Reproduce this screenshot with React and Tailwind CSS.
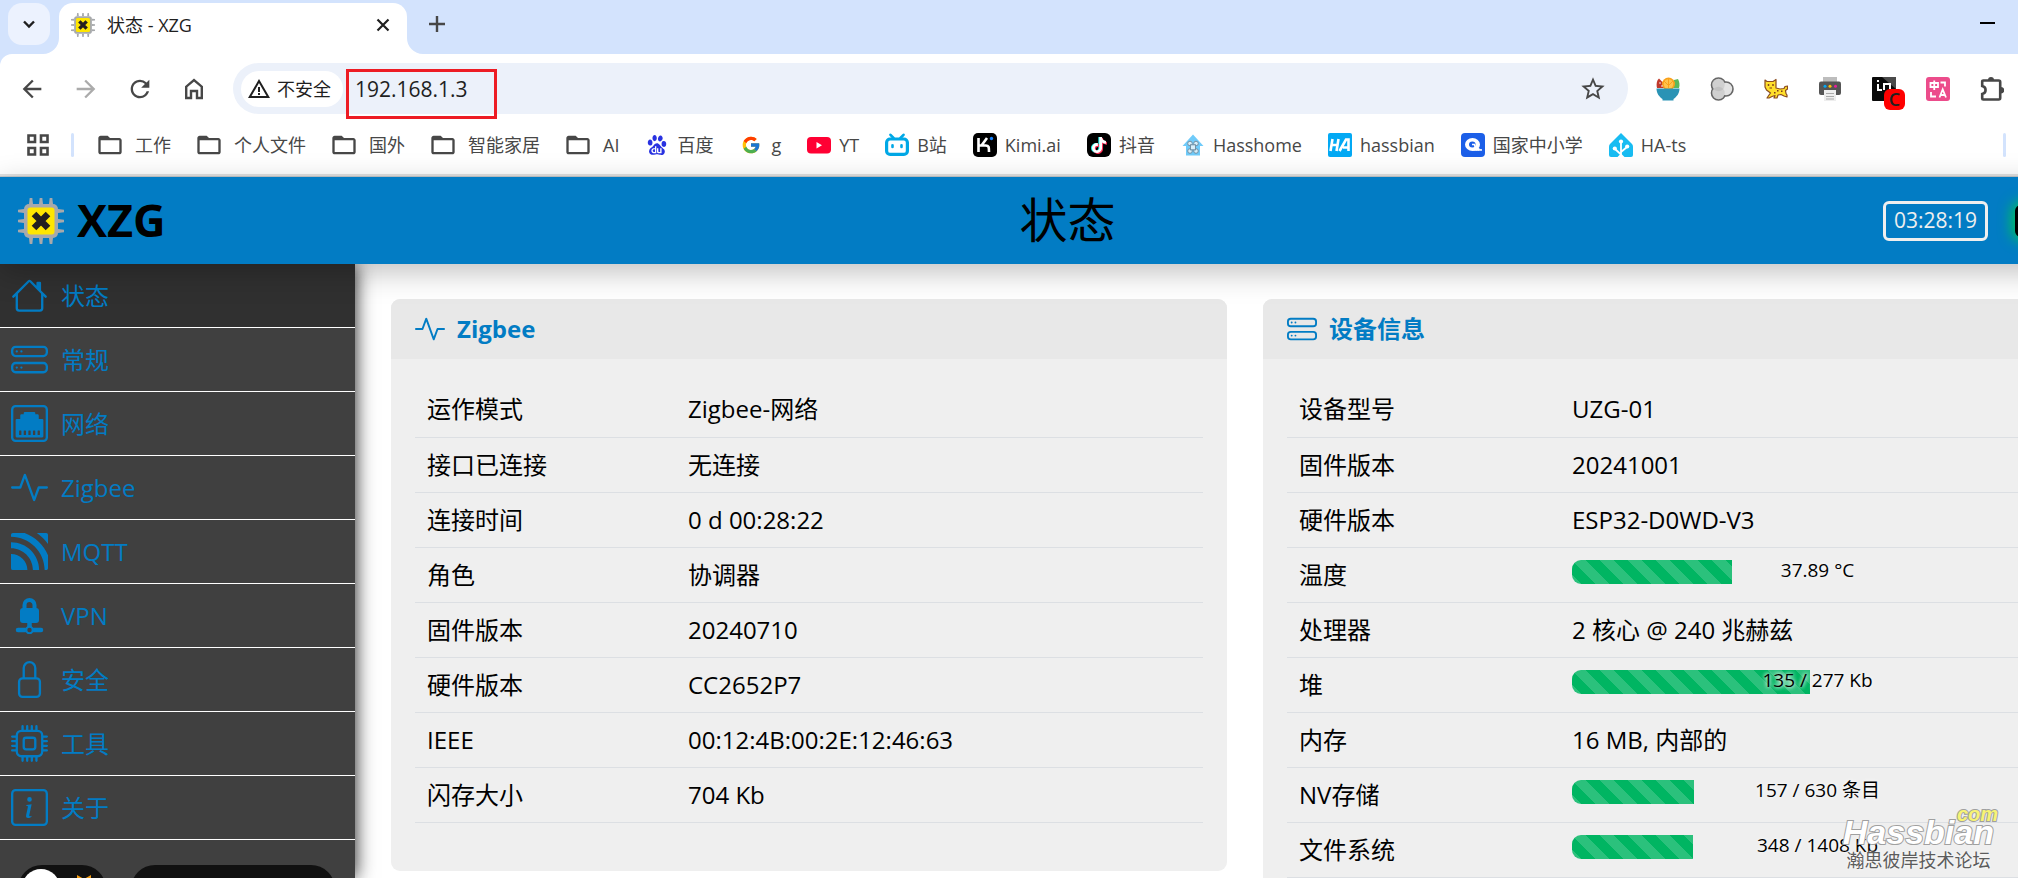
import React from "react";
import {
  BsHouse, BsHddStack, BsEthernet, BsActivity, BsLock, BsCpu, BsInfoSquare,
} from "react-icons/bs";
import { SiMqtt, SiBaidu, SiTiktok } from "react-icons/si";
import { FcGoogle } from "react-icons/fc";
import {
  MdArrowBack, MdArrowForward, MdRefresh, MdStarBorder, MdWarningAmber,
  MdFolderOpen,
} from "react-icons/md";

function ChipLogo({ className }) {
  return (
    <svg viewBox="0 0 46 46" className={className} aria-hidden="true">
      <g fill="#a7a9ac">
        {[11, 21, 31].map((p) => (
          <g key={p}>
            <path d={`M${p} 6 L${p + 0.7} 0 H${p + 3.3} L${p + 4} 6z`} />
            <path d={`M${p} 40 L${p + 0.7} 46 H${p + 3.3} L${p + 4} 40z`} />
            <path d={`M6 ${p} L0 ${p + 0.7} V${p + 3.3} L6 ${p + 4}z`} />
            <path d={`M40 ${p} L46 ${p + 0.7} V${p + 3.3} L40 ${p + 4}z`} />
          </g>
        ))}
        <rect x="6" y="6" width="34" height="34" rx="5" />
      </g>
      <rect x="9.5" y="9.5" width="27" height="27" rx="3" fill="#ffe600" />
      <path d="M16 16 30 30M30 16 16 30" stroke="#231f20" strokeWidth="6.5" />
    </svg>
  );
}

function VpnIcon({ className }) {
  return (
    <svg viewBox="0 0 37 37" className={className} aria-hidden="true">
      <path d="M13.5 13V8a5 5 0 0 1 10 0v5" fill="none" stroke="currentColor" strokeWidth="4" />
      <rect x="9" y="11" width="19" height="15" rx="3" fill="currentColor" />
      <path d="M18.5 25v6" stroke="currentColor" strokeWidth="4.5" />
      <path d="M7 33h23" stroke="currentColor" strokeWidth="4.5" strokeLinecap="round" />
      <circle cx="18.5" cy="33" r="3.2" fill="#404040" stroke="currentColor" strokeWidth="2" />
    </svg>
  );
}

function HomeIcon() {
  return (
    <span className="flex size-7 items-center justify-center">
      <svg viewBox="0 0 24 24" className="size-6" fill="none" stroke="currentColor" strokeWidth="2.4" aria-hidden="true">
        <path d="M4.2 21V9.7L12 3.1l7.8 6.6V21h-4.8v-7H9v7z" />
      </svg>
    </span>
  );
}

function PuzzleIcon() {
  return (
    <svg viewBox="0 0 24 24" className="size-6" aria-hidden="true">
      <path
        d="M2.200 4.500a1 1 0 0 1 1-1h15.500a1.500 1.500 0 0 1 1.500 1.500v16a1.500 1.500 0 0 1-1.500 1.500H3.200a1 1 0 0 1-1-1v-4.500c4.500-1 4.500-7 0-8z"
        fill="none" stroke="currentColor" strokeWidth="2.600"
      />
      <path d="M8 3a3 3 0 0 1 6 0zM21 10a3 3 0 0 1 0 6.500z" fill="currentColor" />
    </svg>
  );
}

const folder = <MdFolderOpen className="size-7 -m-0.5 text-[#474747]" />;

const BilibiliIcon = (
  <svg viewBox="0 0 24 24" className="size-6" fill="none" stroke="#00a8e6" strokeLinecap="round" aria-hidden="true">
    <rect x="1.600" y="6" width="20.800" height="15.400" rx="3.500" strokeWidth="3.200" />
    <path d="M5.500 1.800 8.500 5M18.500 1.800 15.500 5" strokeWidth="2.600" />
    <path d="M7.500 12.200v1.800M16.500 12.200v1.800" strokeWidth="2.600" />
  </svg>
);

const KimiIcon = (
  <svg viewBox="0 0 24 24" className="size-6" aria-hidden="true">
    <rect width="24" height="24" rx="5" fill="#000" />
    <path d="M5.500 5v14M5.500 12.500h8M8.500 12.500 14 5M12.500 12.500c3.500 0 3.500 1.500 3.500 6.500" fill="none" stroke="#fff" strokeWidth="2.600" />
    <circle cx="18.500" cy="5.500" r="1.700" fill="#1783ff" />
  </svg>
);

const TikTokIcon = (
  <span className="relative flex size-6 items-center justify-center rounded-md bg-black">
    <SiTiktok className="absolute size-4 -translate-x-px text-[#25f4ee]" />
    <SiTiktok className="absolute size-4 translate-x-px translate-y-px text-[#fe2c55]" />
    <SiTiktok className="absolute size-4 text-white" />
  </span>
);

const YoutubeIcon = (
  <svg viewBox="0 0 24 24" className="size-6" aria-hidden="true">
    <rect y="4" width="24" height="16.500" rx="4" fill="#ff0033" />
    <path d="M9.500 9v6.500l5.500-3.250z" fill="#fff" />
  </svg>
);

const HassHomeIcon = (
  <svg viewBox="0 0 24 24" className="size-6" aria-hidden="true">
    <path d="M12 1.500 1.500 13H5v9.500h14V13h3.500z" fill="#6fcbfa" />
    <g fill="#d8effa" stroke="#7390a3" strokeWidth="1">
      <circle cx="9" cy="10.500" r="2.300" />
      <circle cx="15" cy="10.500" r="2.300" />
      <circle cx="9" cy="18" r="2.300" />
      <circle cx="15" cy="18" r="2.300" />
      <rect x="9.500" y="11.800" width="5" height="5" />
    </g>
  </svg>
);

const HassbianIcon = (
  <svg viewBox="0 0 24 24" className="size-6" aria-hidden="true">
    <rect width="24" height="24" rx="2" fill="#03a9f4" />
    <path d="M4.500 6 2.500 18M10.500 6l-2 12M3.500 12h6M11.500 18 18 6.500h2.500V18M15 14.500h5.500" fill="none" stroke="#fff" strokeWidth="2.600" />
  </svg>
);

const SchoolIcon = (
  <svg viewBox="0 0 24 24" className="size-6" aria-hidden="true">
    <rect width="24" height="24" rx="4" fill="#1c5fe8" />
    <ellipse cx="11.500" cy="11.500" rx="7.500" ry="6.500" fill="#fff" />
    <path d="M12 17c3 .5 6 .5 9 0-2-.5-4-1.500-5-3z" fill="#fff" stroke="#fff" />
    <ellipse cx="11.300" cy="11.500" rx="3.300" ry="2.900" fill="#1c5fe8" />
    <path d="M11 11.500h2.500l.8 3" fill="none" stroke="#fff" strokeWidth="1.600" />
  </svg>
);

const HomeAssistantIcon = (
  <svg viewBox="0 0 24 24" className="size-6" aria-hidden="true">
    <path d="M12 0 23 11q1 1 1 2.500V22a2 2 0 0 1-2 2H2a2 2 0 0 1-2-2v-8.500Q0 12 1 11z" fill="#18bcf2" />
    <path d="M12 9v15M12 21.500 6 16M12 19l6-5" stroke="#fff" strokeWidth="1.800" />
    <g fill="#fff">
      <circle cx="12" cy="8.500" r="2.100" />
      <circle cx="5.800" cy="15.500" r="2.100" />
      <circle cx="18.200" cy="13.500" r="2.100" />
      <path d="M8.500 24 12 20.500 15.500 24z" />
    </g>
  </svg>
);

const bookmarks = [
  { label: "工作", icon: folder, dir: true },
  { label: "个人文件", icon: folder, dir: true },
  { label: "国外", icon: folder, dir: true },
  { label: "智能家居", icon: folder, dir: true },
  { label: "AI", icon: folder, dir: true },
  { label: "百度", icon: <SiBaidu className="size-5 text-[#2932e1]" /> },
  { label: "g", icon: <FcGoogle className="size-5" /> },
  { label: "YT", icon: YoutubeIcon },
  { label: "B站", icon: BilibiliIcon },
  { label: "Kimi.ai", icon: KimiIcon },
  { label: "抖音", icon: TikTokIcon },
  { label: "Hasshome", icon: HassHomeIcon },
  { label: "hassbian", icon: HassbianIcon },
  { label: "国家中小学", icon: SchoolIcon },
  { label: "HA-ts", icon: HomeAssistantIcon },
];

function SaladIcon() {
  return (
    <svg viewBox="0 0 24 24" className="size-6" aria-hidden="true">
      <path d="M1 11C0 7 1 3 3 1.500L12 11z" fill="#c0392b" />
      <path d="M14 11 18 3l4-1c1.500 3 2 6 1 9z" fill="#5cb85c" />
      <circle cx="12.500" cy="7" r="6.500" fill="#f9a11b" />
      <circle cx="12.500" cy="7" r="4.800" fill="#ffc34d" />
      <path d="M12.500 1.500V11M8 4l5 5M17 4l-5 5" stroke="#f9a11b" />
      <circle cx="4" cy="6" r=".8" fill="#fff" />
      <circle cx="6" cy="9" r=".8" fill="#fff" />
      <path d="M.5 11.500h23c0 5-3 8.500-6 10.500v1.500h-11V22C3.500 20 .5 16.500 .5 11.500z" fill="#2a93b5" />
    </svg>
  );
}

function CirclesIcon() {
  return (
    <svg viewBox="0 0 24 24" className="size-6" aria-hidden="true">
      <g fill="#fff" stroke="#666" strokeWidth="2.400">
        <circle cx="8.500" cy="8" r="6.600" />
        <circle cx="8.500" cy="16" r="6.600" />
        <circle cx="16" cy="12" r="6.600" />
      </g>
      <g fill="#e3e3e3">
        <circle cx="8.500" cy="8" r="6.200" />
        <circle cx="8.500" cy="16" r="6.200" />
        <circle cx="16" cy="12" r="6.200" />
      </g>
      <g fill="#8f8f8f" fillOpacity=".22">
        <circle cx="8.500" cy="8" r="6.200" />
        <circle cx="8.500" cy="16" r="6.200" />
      </g>
    </svg>
  );
}

function CatIcon() {
  return (
    <svg viewBox="0 0 24 24" className="size-6" aria-hidden="true">
      <path
        d="M1 3 3 4.500h6L12 2.500V11l4 1 4-.5 1-2 2.500-.5v3l-2 1.500.5 3 1 1.500v2l-3-1-3-1.500-3 .5-1 3h-3l1-2.500-3 1-3 1.500H3l2-3 1.500-2L2.500 13 1 10z"
        fill="#ffdf2b" stroke="#8a4b1f" strokeWidth="1.200" strokeLinejoin="round"
      />
      <g fill="#7a3c1a">
        <circle cx="4.500" cy="8" r=".9" />
        <circle cx="9" cy="8" r=".9" />
        <path d="M5.500 10.500h2.500v1H5.500zM13 13h1.500v1.500H13zM17 13.500h1.500V15H17zM10 15h1.500v1.500H10z" />
      </g>
    </svg>
  );
}

function PrinterIcon() {
  return (
    <svg viewBox="0 0 24 24" className="size-6" aria-hidden="true">
      <rect x="5" y="0" width="14" height="6" fill="#bdbdbd" />
      <rect x="1" y="4.500" width="22" height="13.500" rx="2" fill="#555" />
      <circle cx="7" cy="9.200" r="1.500" fill="#03a9f4" />
      <circle cx="12" cy="9.200" r="1.500" fill="#ffc107" />
      <circle cx="17.500" cy="9.200" r="1.500" fill="#e91e9a" />
      <rect x="6" y="13" width="12" height="11" fill="#eee" />
      <path d="M8 16.500h8M8 19.500h8M8 22h8" stroke="#aaa" />
    </svg>
  );
}

function BadgeIcon() {
  return (
    <span className="relative block size-6">
      <svg viewBox="0 0 24 24" className="size-6" aria-hidden="true">
        <rect width="24" height="24" rx="1" fill="#0a0a0a" />
        <path d="M10 0h14v12z" fill="#4a4a4a" />
        <path d="M6 3v2M6 7v6h4M12 13V7h6v5" fill="none" stroke="#fff" strokeWidth="2" />
      </svg>
      <span className="absolute top-3 left-3 flex size-[21px] items-center justify-center rounded-md bg-[#f00] text-[18px] leading-5 font-semibold text-[#202020]">
        C
      </span>
    </span>
  );
}

function TranslateIcon() {
  return (
    <svg viewBox="0 0 24 24" className="size-6" aria-hidden="true">
      <rect width="24" height="24" rx="3" fill="#ec4c8b" />
      <g fill="none" stroke="#fff" strokeWidth="1.800">
        <path d="M4.500 6h7.500v4H4.500zM8.250 3.500V13" />
        <path d="M13.500 20.500 16.700 12.500 20 20.500M14.500 18h4.500" />
        <path d="M14.500 5.500h4.500v4M5 15v4.500h5" />
      </g>
    </svg>
  );
}

const extensions = [
  ["水果沙拉", SaladIcon],
  ["三色圆", CirclesIcon],
  ["篡改猫", CatIcon],
  ["打印", PrinterIcon],
  ["标记", BadgeIcon],
  ["翻译", TranslateIcon],
  ["扩展程序", PuzzleIcon],
];

function Browser() {
  return (
    <div className="bg-white text-[#1f1f1f]">
      <div className="flex h-[54px] bg-[#d3e3fd] pt-[3px] pl-2">
        <button aria-label="搜索标签页" className="flex size-[42px] shrink-0 items-center justify-center rounded-[14px] bg-[#ecf2fe]">
          <svg viewBox="0 0 14 14" className="size-3.5" fill="none" stroke="currentColor" strokeWidth="2.400" aria-hidden="true">
            <path d="M2 4.500 7 9.500l5-5" />
          </svg>
        </button>
        <div className="relative ml-[9px] flex w-[348px] shrink-0 items-center rounded-t-[14px] bg-white px-3 pb-2">
          <svg viewBox="0 0 16 16" className="absolute bottom-0 -left-4 size-4" aria-hidden="true">
            <path d="M16 0v16H0A16 16 0 0 0 16 0" fill="#fff" />
          </svg>
          <svg viewBox="0 0 16 16" className="absolute -right-4 bottom-0 size-4" aria-hidden="true">
            <path d="M0 0v16h16A16 16 0 0 1 0 0" fill="#fff" />
          </svg>
          <ChipLogo className="size-6" />
          <span className="ml-3 flex-1 text-[18px] leading-6">状态 - XZG</span>
          <button aria-label="关闭标签页" className="mr-1 flex size-4 items-center justify-center">
            <svg viewBox="0 0 14 14" className="size-3.5" stroke="currentColor" strokeWidth="2.200" aria-hidden="true">
              <path d="M1.500 1.500l11 11M12.500 1.500l-11 11" />
            </svg>
          </button>
        </div>
        <button aria-label="新标签页" className="ml-[22px] flex h-[42px] w-4 items-center text-[#474747]">
          <svg viewBox="0 0 16 16" className="size-4" stroke="currentColor" strokeWidth="2.400" aria-hidden="true">
            <path d="M8 0v16M0 8h16" />
          </svg>
        </button>
        <button aria-label="最小化" className="mr-[23px] ml-auto flex h-10 w-[15px] items-center">
          <span className="h-0.5 w-full bg-black" />
        </button>
      </div>

      <div className="relative flex h-[69px] items-center pr-[14px] pl-[18px]">
        <svg viewBox="0 0 12 12" className="absolute top-0 left-0 size-3" aria-hidden="true">
          <path d="M0 0h12A12 12 0 0 0 0 12z" fill="#d3e3fd" />
        </svg>
        <div className="flex shrink-0 gap-[26px] text-[#474747]">
          <button aria-label="后退"><MdArrowBack className="size-7" /></button>
          <button aria-label="前进" className="text-[#ababab]"><MdArrowForward className="size-7" /></button>
          <button aria-label="重新加载"><MdRefresh className="size-7" /></button>
          <button aria-label="主页"><HomeIcon /></button>
        </div>
        <div className="ml-[25px] flex h-[51px] flex-1 items-center rounded-full bg-[#ecf1fa] pr-[21px] pl-2">
          <button className="flex h-9 shrink-0 items-center gap-1.5 rounded-full bg-white pr-3 pl-1.5 text-[18px] leading-6">
            <MdWarningAmber className="size-6" />
            不安全
          </button>
          <div className="relative ml-3 h-10 w-[142px] shrink-0">
            <input
              aria-label="地址"
              defaultValue="192.168.1.3"
              className="h-10 w-full bg-transparent text-[21px] outline-none"
            />
            <span className="pointer-events-none absolute top-0 right-0 -bottom-2.5 -left-[9px] border-3 border-[#ed1c24]" />
          </div>
          <button aria-label="收藏" className="ml-auto text-[#474747]"><MdStarBorder className="size-7" /></button>
        </div>
        <div className="ml-7 flex shrink-0 items-center gap-[30px] text-[#474747]">
          {extensions.map(([name, Icon]) => (
            <button key={name} aria-label={name}><Icon /></button>
          ))}
        </div>
      </div>

      <nav aria-label="书签" className="flex h-[51px] items-start pt-2 pr-3 pl-[27px] text-[#474747]">
        <button aria-label="应用" className="flex h-7 items-center">
          <svg viewBox="0 0 22 22" className="size-[22px]" fill="none" stroke="currentColor" strokeWidth="2.600" aria-hidden="true">
            <path d="M1.500 1.500h6.500v6.500H1.500zM14 1.500h6.500v6.500H14zM1.500 14h6.500v6.500H1.500zM14 14h6.500v6.500H14z" />
          </svg>
        </button>
        <span className="mx-[22px] mt-0.5 h-6 w-[3px] rounded-full bg-[#d3e3fd]" />
        <ul className="flex flex-1 gap-[26px] pl-0.5">
          {bookmarks.map((b) => (
            <li key={b.label}>
              <a href="#" className={b.dir ? "flex h-7 items-center gap-[13px]" : "flex h-7 items-center gap-2"}>
                <span className="flex size-6 shrink-0 items-center justify-center">{b.icon}</span>
                <span className="text-[18px] leading-7 whitespace-nowrap">{b.label}</span>
              </a>
            </li>
          ))}
        </ul>
        <span className="mt-0.5 h-6 w-[3px] rounded-full bg-[#d3e3fd]" />
      </nav>
      <div className="h-[3px] border-b border-[#c4c8ca] bg-[#e2e2e2]" />
    </div>
  );
}

const menu = [
  ["状态", BsHouse],
  ["常规", BsHddStack],
  ["网络", BsEthernet],
  ["Zigbee", BsActivity],
  ["MQTT", SiMqtt],
  ["VPN", VpnIcon],
  ["安全", BsLock],
  ["工具", BsCpu],
  ["关于", BsInfoSquare],
];

const zigbee = [
  ["运作模式", "Zigbee-网络"],
  ["接口已连接", "无连接"],
  ["连接时间", "0 d 00:28:22"],
  ["角色", "协调器"],
  ["固件版本", "20240710"],
  ["硬件版本", "CC2652P7"],
  ["IEEE", "00:12:4B:00:2E:12:46:63"],
  ["闪存大小", "704 Kb"],
];

const device = [
  ["设备型号", "UZG-01"],
  ["固件版本", "20241001"],
  ["硬件版本", "ESP32-D0WD-V3"],
  ["温度", { text: "37.89 °C", percent: 32.6 }],
  ["处理器", "2 核心 @ 240 兆赫兹"],
  ["堆", { text: "135 / 277 Kb", percent: 48.5 }],
  ["内存", "16 MB, 内部的"],
  ["NV存储", { text: "157 / 630 条目", percent: 24.9 }],
  ["文件系统", { text: "348 / 1408 Kb", percent: 24.7 }],
];

function Meter({ text, percent }) {
  return (
    <div role="progressbar" aria-valuenow={percent} aria-label={text} className="relative -mt-1.5 h-6">
      <div
        className="h-full rounded-l-[9px] bg-[#00b562] bg-[linear-gradient(45deg,rgba(255,255,255,.17)_25%,transparent_25%,transparent_50%,rgba(255,255,255,.17)_50%,rgba(255,255,255,.17)_75%,transparent_75%,transparent)] bg-[length:28px_28px]"
        style={{ width: `${percent}%` }}
      />
      <span className="absolute inset-x-0 -top-1 text-center text-[19px] leading-7 [text-shadow:0_0_4px_#fff,0_0_4px_#efefef]">
        {text}
      </span>
    </div>
  );
}

function Card({ title, icon: Icon, rows, labelWidth }) {
  return (
    <section className="rounded-[9px] bg-[#efefef] pb-12">
      <h2 className="flex h-[60px] items-center gap-3 rounded-t-[9px] bg-[#e8e8e8] px-6 text-[24px] font-bold text-[#027cc4]">
        <Icon className="size-[30px]" />
        {title}
      </h2>
      <div className="px-6 pt-[23px]">
        <table className="w-full table-fixed border-collapse text-[24px] leading-8 text-black">
          <tbody>
            {rows.map(([label, value]) => (
              <tr key={label} className="h-[55px] border-b border-[#dcdfe3]">
                <th scope="row" className={`${labelWidth} px-3 text-left font-normal`}>
                  {label}
                </th>
                <td className="px-3">
                  {typeof value === "string" ? value : <Meter {...value} />}
                </td>
              </tr>
            ))}
          </tbody>
        </table>
      </div>
    </section>
  );
}

export default function App() {
  return (
    <div className="relative flex h-screen flex-col overflow-hidden bg-white font-['Open_Sans','Noto_Sans_CJK_SC',sans-serif]">
      <Browser />
      <div className="flex min-h-0 w-[105.8%] flex-1 flex-col">
        <header className="relative z-10 grid h-[87px] shrink-0 grid-cols-[1fr_auto_1fr] items-center bg-[#027cc4] px-[18px] text-black shadow-[0_8px_28px_rgba(0,0,0,.25)]">
          <a href="#" className="flex items-center gap-[13px]">
            <ChipLogo className="size-[46px]" />
            <span className="pb-0.5 text-[45px] leading-none font-bold">XZG</span>
          </a>
          <h1 className="pb-0.5 text-[48px] leading-none">状态</h1>
          <div className="flex items-center justify-end gap-[27px]">
            <time className="rounded-md border-3 border-[#efefef] px-2 pb-0.5 text-[21px] leading-8 text-[#efefef]">03:28:19</time>
            <span className="h-8 w-[102px] rounded-md border-3 border-black bg-[#00b562] shadow-[0_0_14px_3px_#00c853]" />
          </div>
        </header>

        <div className="flex min-h-0 flex-1">
          <aside className="w-[355px] shrink-0 bg-[#404040] shadow-[0_0_18px_rgba(0,0,0,.9)]">
            <ul>
              {menu.map(([label, Icon], i) => (
                <li key={label} className={i === 0 ? "border-b border-white bg-[#303030]" : "border-b border-white"}>
                  <a href="#" className="flex h-[63px] items-center gap-[13px] pl-[11px] text-[24px] text-[#027cc4]">
                    <Icon className="size-[37px]" />
                    {label}
                  </a>
                </li>
              ))}
            </ul>
            <div className="flex gap-[25px] pt-[25px] pl-[18px]">
              <label className="flex h-12 w-[88px] items-start justify-between rounded-full bg-[#111] pt-1 pr-3.5 pl-1">
                <input type="checkbox" aria-label="主题" className="size-[38px] appearance-none rounded-full bg-white" />
                <svg viewBox="0 0 16 16" className="mt-1.5 size-4" aria-hidden="true">
                  <path d="M1 0l7 4 7-4v16H1z" fill="#f39c12" />
                </svg>
              </label>
              <button aria-label="语言" className="h-12 w-[204px] rounded-full bg-[#111]" />
            </div>
          </aside>
          <main className="grid min-w-0 flex-1 grid-cols-2 items-start gap-9 px-9 pt-[35px]">
            <Card title="Zigbee" icon={BsActivity} rows={zigbee} labelWidth="w-[261px]" />
            <Card title="设备信息" icon={BsHddStack} rows={device} labelWidth="w-[273px]" />
          </main>
        </div>
      </div>

      <div className="absolute right-6 bottom-2 z-20 flex flex-col items-center">
        <span className="relative font-['Liberation_Sans',sans-serif] text-[34px] leading-9 font-bold text-white italic [paint-order:stroke_fill] [-webkit-text-stroke:2px_#a0a0a0]">
          Hassbian
          <span className="absolute -top-3 -right-1 text-[20px] leading-6 text-[#f7f374]">com</span>
        </span>
        <span className="text-[18px] leading-5 text-[#5c5c5c] [text-shadow:0_0_3px_#fff]">瀚思彼岸技术论坛</span>
      </div>
    </div>
  );
}
